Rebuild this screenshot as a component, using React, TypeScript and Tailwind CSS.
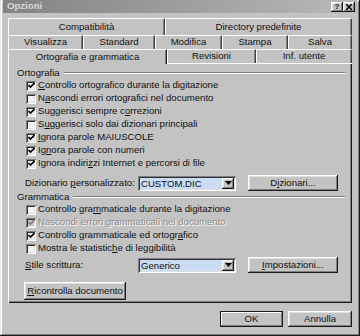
import React from "react";

const raised =
  "shadow-[inset_-1px_-1px_#1a1a1a,inset_1px_1px_#ffffff,inset_-2px_-2px_#808080,inset_2px_2px_#dfdfdf]";
const sunken =
  "shadow-[inset_1px_1px_#808080,inset_-1px_-1px_#ffffff,inset_2px_2px_#303030,inset_-2px_-2px_#dfdfdf]";

// label with one underlined accelerator letter
function Acc({ text, at }: { text: string; at: number }) {
  if (at < 0) return <>{text}</>;
  return (
    <>
      {text.slice(0, at)}
      <span className="underline underline-offset-1">{text[at]}</span>
      {text.slice(at + 1)}
    </>
  );
}

function Check({
  label,
  at,
  checked,
  disabled,
}: {
  label: string;
  at: number;
  checked?: boolean;
  disabled?: boolean;
}) {
  return (
    <div className="h-[13px] flex items-center pl-[17px]">
      <div
        className={`w-[10px] h-[10px] flex items-center justify-center ${sunken} ${
          disabled ? "bg-[#c8c8c8]" : "bg-[#eef2f8]"
        }`}
      >
        {checked && (
          <svg width="7" height="7" viewBox="0 0 7 7">
            <path
              d="M0.5 3 L2.5 5 L6.5 1"
              fill="none"
              stroke={disabled ? "#808080" : "#000"}
              strokeWidth="1.6"
            />
          </svg>
        )}
      </div>
      <span
        className={`ml-[2px] ${
          disabled ? "text-[#8c8c8c] [text-shadow:1px_1px_#ffffff]" : ""
        }`}
      >
        <Acc text={label} at={at} />
      </span>
    </div>
  );
}

function Group({ label }: { label: string }) {
  return (
    <div className="h-[12px] flex items-center pl-[8px] pr-[7px]">
      <span>{label}</span>
      <div className="flex-1 ml-[4px] h-[2px] border-t border-t-[#808080] border-b border-b-white" />
    </div>
  );
}

function Combo({ value }: { value: string }) {
  return (
    <div
      className={`w-[98px] h-[15px] flex items-stretch p-[2px] bg-[#c9dcf3] ${sunken}`}
    >
      <span className="flex-1 pl-[1px] leading-[11px]">{value}</span>
      <div
        className={`w-[12px] bg-[#c3c3c3] flex items-center justify-center ${raised}`}
      >
        <svg width="7" height="4" viewBox="0 0 7 4">
          <path d="M0 0 H7 L3.5 4 Z" fill="#000" />
        </svg>
      </div>
    </div>
  );
}

function Button({
  children,
  w,
  h = "h-[16px]",
  def,
}: {
  children: React.ReactNode;
  w: string;
  h?: string;
  def?: boolean;
}) {
  return (
    <div
      className={`${w} ${h} flex items-center justify-center bg-[#c3c3c3] ${
        def
          ? "shadow-[inset_0_0_0_1px_#1a1a1a,inset_-2px_-2px_#808080,inset_2px_2px_#ffffff]"
          : raised
      }`}
    >
      {children}
    </div>
  );
}

function Tab({ label, w, h }: { label: string; w: string; h: string }) {
  return (
    <div
      className={`${w} ${h} flex items-center justify-center border-t border-l border-white border-r border-r-[#404040] shadow-[inset_-1px_0_#808080]`}
    >
      {label}
    </div>
  );
}

export default function App() {
  return (
    <div
      className={`w-[360px] h-[336px] bg-[#c3c3c3] flex flex-col px-[3px] text-[9.6px] text-[#111] font-['Liberation_Sans',Arial,sans-serif] shadow-[inset_-1px_-1px_#1a1a1a,inset_1px_1px_#e6e6e6,inset_-2px_-2px_#808080,inset_2px_2px_#ffffff]`}
    >
      {/* title bar */}
      <div className="h-[13px] flex items-center bg-linear-to-r from-[#838383] to-[#b9b9b9] pl-[4px] pr-[2px]">
        <span className="font-bold text-[#d8d8d8] flex-1">Opzioni</span>
        <div className="flex">
          <div
            className={`w-[12px] h-[10px] bg-[#c3c3c3] flex items-center justify-center font-bold text-[8px] leading-none ${raised}`}
          >
            ?
          </div>
          <div
            className={`w-[12px] h-[10px] bg-[#c3c3c3] flex items-center justify-center ${raised}`}
          >
            <svg width="6" height="6" viewBox="0 0 6 6">
              <path d="M0 0 L6 6 M6 0 L0 6" stroke="#000" strokeWidth="1.5" />
            </svg>
          </div>
        </div>
      </div>

      <div className="flex flex-col px-[5px] pt-[5px]">
        {/* tab rows */}
        <div className="flex">
          <Tab label="Compatibilità" w="w-[157px]" h="h-[17px]" />
          <Tab label="Directory predefinite" w="flex-1" h="h-[17px]" />
        </div>
        <div className="flex">
          <Tab label="Visualizza" w="w-[75px]" h="h-[14px]" />
          <Tab label="Standard" w="w-[72px]" h="h-[14px]" />
          <Tab label="Modifica" w="w-[67px]" h="h-[14px]" />
          <Tab label="Stampa" w="w-[66px]" h="h-[14px]" />
          <Tab label="Salva" w="flex-1" h="h-[14px]" />
        </div>
        <div className="flex">
          <div className="w-[159px] h-[15px] flex items-center justify-center border-t border-l border-white border-r border-r-[#1a1a1a] shadow-[inset_-1px_0_#808080]">
            Ortografia e grammatica
          </div>
          <div className="flex-1 flex border-b border-white">
            <Tab label="Revisioni" w="w-[89px]" h="h-[14px]" />
            <Tab label="Inf. utente" w="flex-1" h="h-[14px]" />
          </div>
        </div>

        {/* panel */}
        <div className="h-[239px] flex flex-col pt-[3px] border-l border-white shadow-[inset_-1px_-1px_#1a1a1a,inset_-2px_-2px_#808080]">
          <Group label="Ortografia" />
          <Check label="Controllo ortografico durante la digitazione" at={0} checked />
          <Check label="Nascondi errori ortografici nel documento" at={1} />
          <Check label="Suggerisci sempre correzioni" at={19} checked />
          <Check label="Suggerisci solo dai dizionari principali" at={1} />
          <Check label="Ignora parole MAIUSCOLE" at={0} checked />
          <Check label="Ignora parole con numeri" at={2} checked />
          <Check label="Ignora indirizzi Internet e percorsi di file" at={13} checked />

          <div className="h-[16px] mt-[5px] flex items-center pl-[16px]">
            <span className="w-[113px]">
              <Acc text="Dizionario personalizzato:" at={11} />
            </span>
            <Combo value="CUSTOM.DIC" />
            <div className="ml-[12px]">
              <Button w="w-[90px]" h="h-[16px]">
                <Acc text="Dizionari..." at={1} />
              </Button>
            </div>
          </div>

          <Group label="Grammatica" />
          <Check label="Controllo grammaticale durante la digitazione" at={13} />
          <Check label="Nascondi errori grammaticali nel documento" at={-1} checked disabled />
          <Check label="Controllo grammaticale ed ortografico" at={32} checked />
          <Check label="Mostra le statistiche di leggibilità" at={19} />

          <div className="h-[16px] mt-[2px] flex items-center pl-[16px]">
            <span className="w-[113px]">
              <Acc text="Stile scrittura:" at={0} />
            </span>
            <Combo value="Generico" />
            <div className="ml-[12px]">
              <Button w="w-[90px]" h="h-[16px]">
                <Acc text="Impostazioni..." at={0} />
              </Button>
            </div>
          </div>

          <div className="mt-[9px] pl-[15px]">
            <Button w="w-[102px]" h="h-[18px]">
              <Acc text="Ricontrolla documento" at={0} />
            </Button>
          </div>
        </div>

        {/* bottom buttons */}
        <div className="flex justify-end gap-[5px] mt-[8px]">
          <Button w="w-[63px]" def>
            OK
          </Button>
          <Button w="w-[64px]">Annulla</Button>
        </div>
      </div>
    </div>
  );
}
